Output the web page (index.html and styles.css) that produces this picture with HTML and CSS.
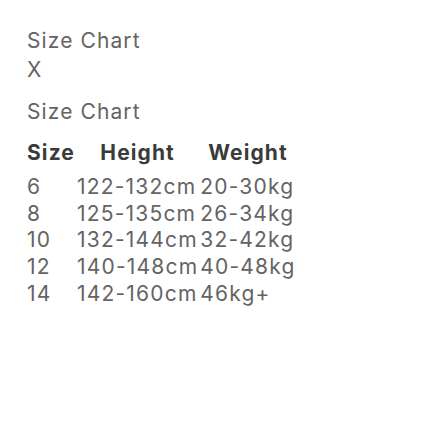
FILE: index.html
```html
<!DOCTYPE html>
<html>
<head>
<meta charset="utf-8">
<link rel="stylesheet" href="styles.css">
</head>
<body>
<div class="modal">
  <div class="title">Size Chart</div>
  <div class="close">X</div>
  <table class="chart">
    <caption>Size Chart</caption>
    <thead>
      <tr><th>Size</th><th>Height</th><th>Weight</th></tr>
    </thead>
    <tbody>
      <tr><td>6</td><td>122-132cm</td><td>20-30kg</td></tr>
      <tr><td>8</td><td>125-135cm</td><td>26-34kg</td></tr>
      <tr><td>10</td><td>132-144cm</td><td>32-42kg</td></tr>
      <tr><td>12</td><td>140-148cm</td><td>40-48kg</td></tr>
      <tr><td>14</td><td>142-160cm</td><td>46kg+</td></tr>
    </tbody>
  </table>
</div>
</body>
</html>
```
FILE: styles.css
```css
html, body {
  margin: 0;
  background: #ffffff;
}
body {
  font-family: Inter, "Open Sans", sans-serif;
  color: #646464;
}
.modal {
  padding: 26px 0 0 27px;
}
.title {
  font-size: 21px;
  line-height: 29px;
  letter-spacing: 1.1px;
}
.close {
  font-size: 21px;
  line-height: 30px;
  height: 42px;
}
.chart {
  border-collapse: separate;
  border-spacing: 0;
  margin-left: -1px;
}
.chart caption {
  text-align: left;
  font-size: 21px;
  line-height: 30px;
  letter-spacing: 1.1px;
  padding: 0 0 5px 1px;
}
.chart th {
  font-size: 21px;
  font-weight: 700;
  color: #3b3b3b;
  line-height: 40px;
  padding: 1px;
  letter-spacing: 1.1px;
  text-align: center;
}
.chart td {
  font-size: 21px;
  line-height: 24.7px;
  padding: 1px;
  text-align: left;
  letter-spacing: 1.2px;
}
```
